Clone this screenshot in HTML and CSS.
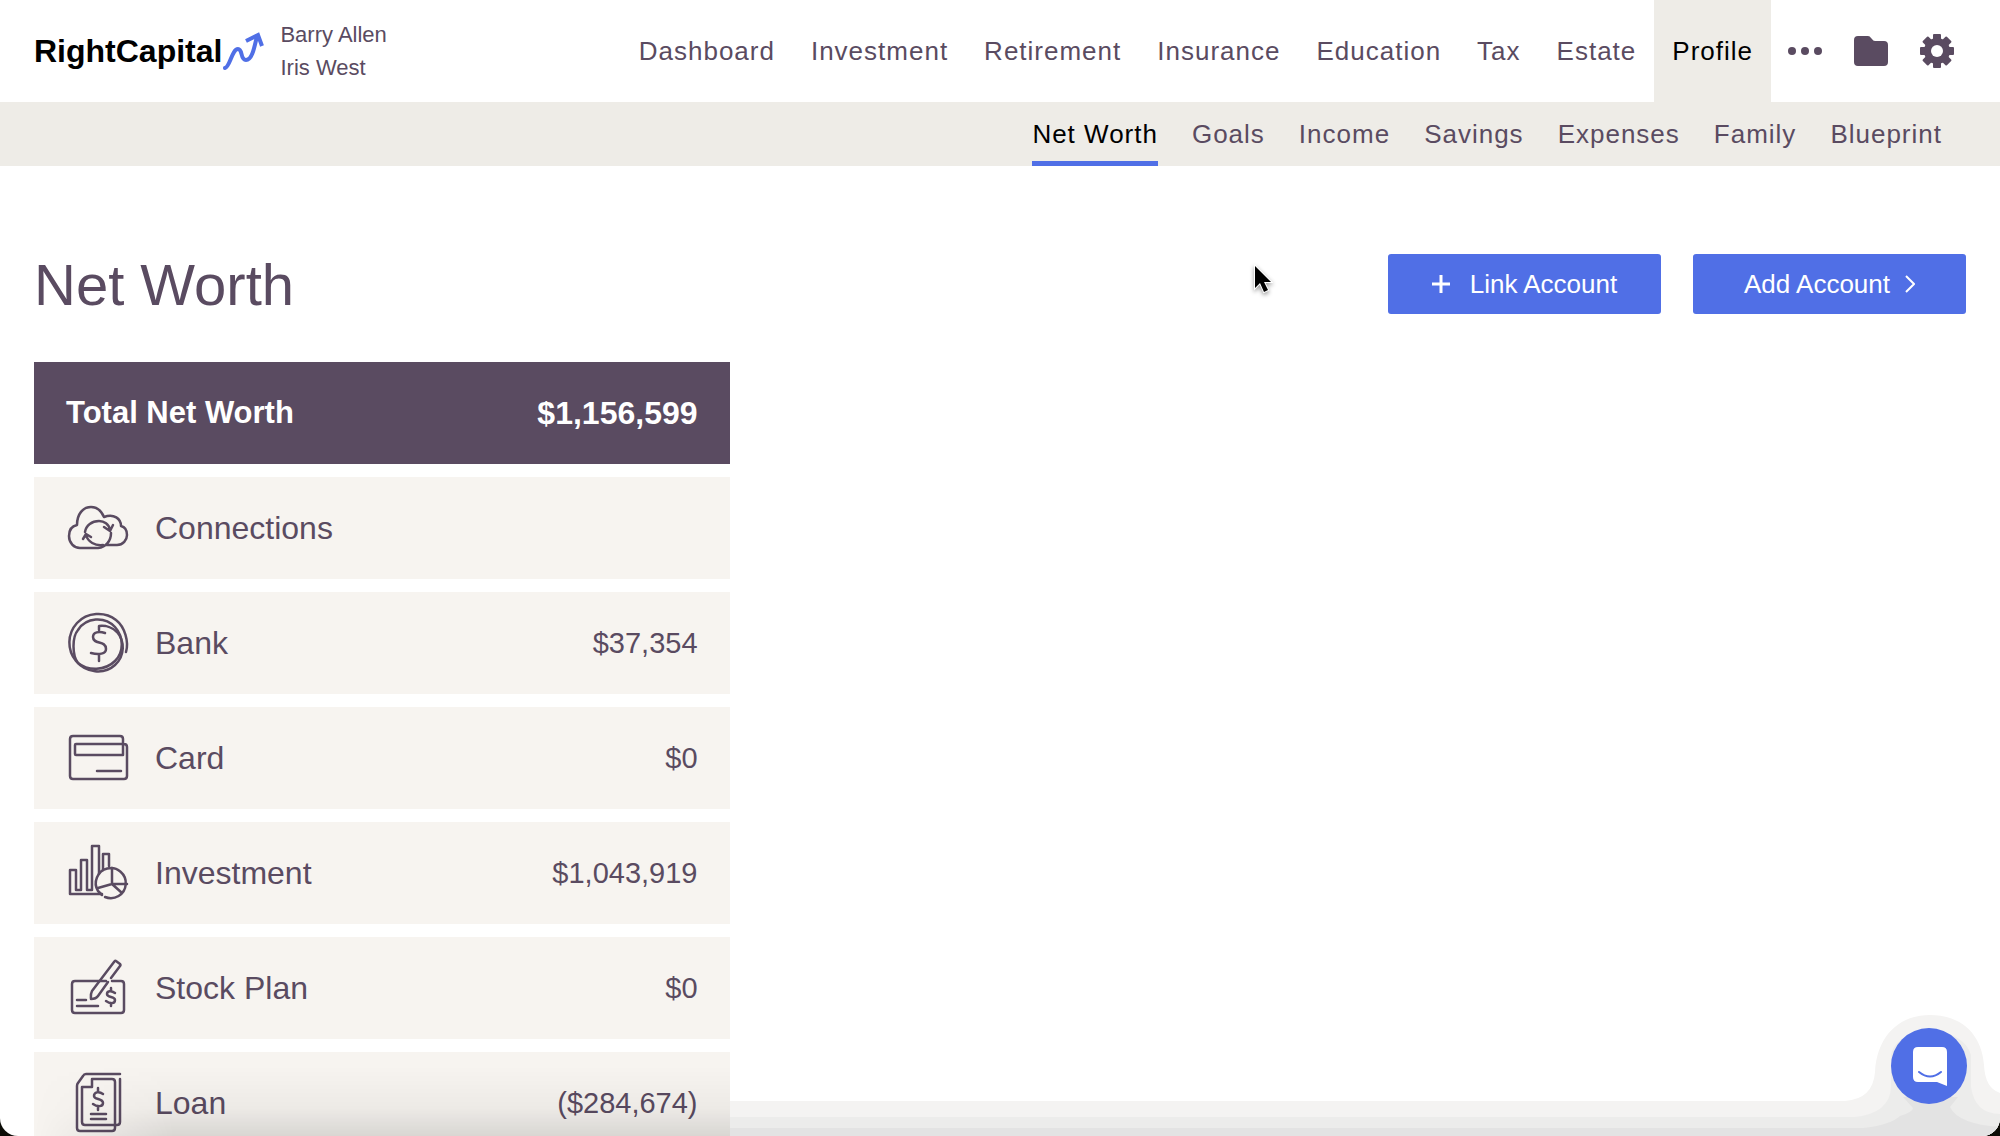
FILE: index.html
```html
<!DOCTYPE html>
<html lang="en">
<head>
    <meta charset="UTF-8">
    <meta name="viewport" content="width=device-width, initial-scale=1">
    <title>RightCapital - Net Worth</title>
    <link rel="stylesheet" href="styles.css">
</head>
<body>

<div class="window">

    <header class="header">
        <a class="logo" href="#">RightCapital<svg class="logo-mark" viewBox="0 0 44 40" aria-hidden="true">
            <path d="M3 37C8 36 10 18 16 18C21 18 18 29 24 29C30 29 32 18 35 5" stroke-linecap="round"/>
            <path d="M24 10L36 4L40 15"/>
        </svg></a>
        <div class="clients">
            <span>Barry Allen</span>
            <span>Iris West</span>
        </div>

        <nav class="main-nav">
            <a href="#">Dashboard</a>
            <a href="#">Investment</a>
            <a href="#">Retirement</a>
            <a href="#">Insurance</a>
            <a href="#">Education</a>
            <a href="#">Tax</a>
            <a href="#">Estate</a>
            <a href="#" class="active">Profile</a>
        </nav>

        <div class="tools">
            <button type="button" aria-label="More">
                <svg viewBox="0 0 34 34"><circle cx="4" cy="17" r="4"/><circle cx="17" cy="17" r="4"/><circle cx="30" cy="17" r="4"/></svg>
            </button>
            <button type="button" aria-label="Documents">
                <svg viewBox="0 0 34 34"><path d="M4 2H14Q16 2 17 4L18 5Q19 7 21 7H30Q34 7 34 11V28Q34 32 30 32H4Q0 32 0 28V6Q0 2 4 2Z"/></svg>
            </button>
            <button type="button" aria-label="Settings">
                <svg viewBox="0 0 34 34">
                    <rect x="13" y="0" width="8" height="34" rx="1"/>
                    <rect x="0" y="13" width="34" height="8" rx="1"/>
                    <rect x="13" y="0" width="8" height="34" rx="1" transform="rotate(45 17 17)"/>
                    <rect x="13" y="0" width="8" height="34" rx="1" transform="rotate(-45 17 17)"/>
                    <circle cx="17" cy="17" r="13"/>
                    <circle cx="17" cy="17" r="6" fill="#fff"/>
                </svg>
            </button>
        </div>
    </header>

    <nav class="sub-nav">
        <a href="#" class="active">Net Worth</a>
        <a href="#">Goals</a>
        <a href="#">Income</a>
        <a href="#">Savings</a>
        <a href="#">Expenses</a>
        <a href="#">Family</a>
        <a href="#">Blueprint</a>
    </nav>

    <main>
        <div class="title-row">
            <h1>Net Worth</h1>
            <button type="button" class="btn btn-link">
                <svg width="18" height="18" viewBox="0 0 18 18"><path d="M9 0V18M0 9H18" stroke-width="3"/></svg>
                Link Account
            </button>
            <button type="button" class="btn btn-add">
                Add Account
                <svg width="10" height="18" viewBox="0 0 10 18"><path d="M1 1L9 9L1 17" stroke-width="2"/></svg>
            </button>
        </div>

        <div class="accounts">
            <div class="row total">
                <span class="label">Total Net Worth</span>
                <span class="amount">$1,156,599</span>
            </div>
            <a class="row" href="#">
                <svg viewBox="0 0 64 64">
                    <path d="M41 49H51C57 49 61 44 61 39C61 34 59 31 55 30C55 23 48 17 38 21C35 14 30 11 25 11C17 11 11 18 11 29C6 30 3 34 3 40C3 47 8 52 14 52H32C40 51 45 45 45 37"/>
                    <path d="M19 36C20 29 26 25 33 25C38 25 43 28 44 34M38 31L44 35L47 29"/>
                    <path d="M37 49C29 50 22 46 20 39M17 43L20 38L25 41"/>
                </svg>
                <span class="label">Connections</span>
            </a>
            <a class="row" href="#">
                <svg viewBox="0 0 64 64">
                    <path d="M60 41C63 31 59 16 50 9C39 0 21 1 11 12C1 23 1 39 10 50C20 62 38 64 49 54C59 45 59 30 51 21C47 17 40 14 33 15V19"/>
                    <path d="M12 52C6 44 6 26 12 19C20 6 39 5 49 16C58 26 58 41 49 50C39 60 22 60 12 52"/>
                    <path d="M39 22C33 20 27 21 27 26C27 34 40 29 40 38C40 43 33 44 25 42M33 43V50"/>
                </svg>
                <span class="label">Bank</span>
                <span class="amount">$37,354</span>
            </a>
            <a class="row" href="#">
                <svg viewBox="0 0 64 64">
                    <path d="M57 29V13Q57 10 54 10H7Q4 10 4 13V50Q4 53 7 53H58Q61 53 61 50V21Q61 18 58 18H10Q9 18 9 19V28Q9 29 10 29H57"/>
                    <path d="M31 45H55"/>
                </svg>
                <span class="label">Card</span>
                <span class="amount">$0</span>
            </a>
            <a class="row" href="#">
                <svg viewBox="0 0 64 64">
                    <path d="M36 53H4V29H10V49H15V19H21V49H26V5H33V33M37 29V13H43V25"/>
                    <path d="M39 56A15 15 0 1 0 32 50L36 54M46 27V43H61M46 43L56 52M46 43L32 47"/>
                </svg>
                <span class="label">Investment</span>
                <span class="amount">$1,043,919</span>
            </a>
            <a class="row" href="#">
                <svg viewBox="0 0 64 64">
                    <path d="M40 25H9Q6 25 6 28V54Q6 57 9 57H55Q58 57 58 54V28Q58 25 55 25H46"/>
                    <path d="M45 22L54 10Q55 9 54 8L50 5Q49 4 48 6L26 35C24 39 25 41 25 43C28 43 30 43 32 40L42 26"/>
                    <path d="M11 44H20M11 50H32M49 37C45 34 41 35 41 38C41 42 49 40 49 44C49 48 44 48 40 45M45 32V35M45 47V50"/>
                </svg>
                <span class="label">Stock Plan</span>
                <span class="amount">$0</span>
            </a>
            <a class="row" href="#">
                <svg viewBox="0 0 64 64">
                    <path d="M54 3H20Q18 3 17 5L12 12Q11 13 11 15V57Q11 60 14 60H46Q49 60 49 57V11Q49 8 46 8H26V16H16V51Q16 54 19 54H51Q54 54 54 51V8"/>
                    <path d="M37 23C33 20 28 21 28 25C28 29 37 27 37 32C37 36 31 36 27 33M32 17V21M32 35V39M25 43H40M25 48H40"/>
                </svg>
                <span class="label">Loan</span>
                <span class="amount">($284,674)</span>
            </a>
        </div>
    </main>

    <!-- shade along the bottom edge, behind the chat button -->
    <div class="shade-rows"></div>
    <div class="shade">
        <div class="shade-line"></div>
        <svg class="shade-end" viewBox="0 0 300 146" aria-hidden="true">
            <path fill="#f4f3f2" d="M0 111H145Q173 109 175 82C177 45 200 25 230 25C262 25 282 45 284 75Q285 98 300 103V146H0Z"/>
            <path fill="#ececeb" d="M0 127H155Q190 123 191 97V65C198 33 262 33 271 65V97Q275 124 300 124V146H0Z"/>
            <path fill="#e3e3e3" d="M0 138H163Q190 135 200 126Q213 122 213 118L203 107H258L250 117Q258 134 300 137V146H0Z"/>
        </svg>
    </div>

    <button type="button" class="chat" aria-label="Open chat">
        <svg viewBox="0 0 76 76">
            <path fill="#fff" d="M27 19H51Q56 19 56 24V58L46 54H27Q22 54 22 49V24Q22 19 27 19Z"/>
            <path fill="none" stroke="#506fe6" stroke-width="2" stroke-linecap="round" d="M28 44Q39 53 50 44"/>
        </svg>
    </button>

    <svg class="pointer" viewBox="0 0 20 32" aria-hidden="true">
        <path d="M2 2V24L7 19L11 28L15 26L11 18H18Z"/>
    </svg>

</div>

</body>
</html>
```
FILE: styles.css
```css
* {
    box-sizing: border-box;
}

html {
    background: #0c0c06;
}

body {
    margin: 0;
    font-family: "Liberation Sans", Arial, sans-serif;
    font-size: 26px;
    color: #5a4b61;
}

a {
    color: inherit;
    text-decoration: none;
}

button {
    font: inherit;
    border: 0;
    padding: 0;
    cursor: pointer;
}

.window {
    position: relative;
    height: 100vh;
    overflow: hidden;
    background: #fff;
    border-radius: 0 0 18px 18px;
}

/* Header */
.header {
    display: flex;
    align-items: center;
    height: 102px;
    padding: 0 46px 0 34px;
}

.logo {
    display: flex;
    align-items: center;
    font-size: 32px;
    font-weight: bold;
    color: #000;
}

.logo-mark {
    width: 44px;
    height: 40px;
    fill: none;
    stroke: #506fe6;
    stroke-width: 4;
}

.clients {
    display: flex;
    flex-direction: column;
    margin-left: 14px;
    font-size: 22px;
    line-height: 33px;
}

.main-nav {
    display: flex;
    align-self: stretch;
    margin-left: auto;
    letter-spacing: 1px;
}

.main-nav a {
    display: flex;
    align-items: center;
    padding: 0 18px;
}

.main-nav .active {
    background: #eeece7;
    color: #000;
}

.tools {
    display: flex;
    gap: 32px;
    margin-left: 17px;
}

.tools button {
    width: 34px;
    height: 34px;
    background: none;
}

.tools svg {
    display: block;
    fill: #5a4b61;
}

.sub-nav {
    display: flex;
    justify-content: flex-end;
    gap: 34px;
    height: 64px;
    padding: 0 58px;
    background: #eeece7;
    letter-spacing: 1px;
    line-height: 64px;
}

.sub-nav .active {
    color: #000;
    box-shadow: inset 0 -5px #506fe6;
}

/* Content */
main {
    padding: 88px 34px 0;
}

.title-row {
    display: flex;
    align-items: center;
    gap: 32px;
    height: 60px;
    margin-bottom: 48px;
}

h1 {
    margin: 0 auto 0 0;
    font-size: 58px;
    font-weight: normal;
}

.btn {
    display: flex;
    align-items: center;
    justify-content: center;
    width: 273px;
    height: 60px;
    border-radius: 3px;
    background: #506fe6;
    color: #fff;
}

.btn svg {
    fill: none;
    stroke: #fff;
}

.btn-link {
    gap: 20px;
}

.btn-add {
    gap: 15px;
}

.accounts {
    display: flex;
    flex-direction: column;
    gap: 13px;
    width: 36%;
}

.row {
    display: flex;
    align-items: center;
    height: 102px;
    padding: 0 32px;
    background: #f7f4f0;
    font-size: 32px;
}

.row svg {
    width: 64px;
    height: 64px;
    margin-right: 25px;
    fill: none;
    stroke: #5a4b61;
    stroke-width: 2.5;
    stroke-linecap: round;
    stroke-linejoin: round;
}

.amount {
    margin-left: auto;
    font-size: 29px;
}

.total {
    background: #5a4b61;
    color: #fff;
    font-weight: bold;
}

.total .label {
    font-size: 31px;
}

.total .amount {
    font-size: 32px;
}

/* Bottom shade */
.shade-rows,
.shade {
    position: absolute;
    bottom: 0;
    pointer-events: none;
}

.shade-rows {
    left: 34px;
    width: calc((100% - 68px) * 0.36);
    height: 70px;
    background: linear-gradient(rgba(0, 0, 0, 0), rgba(0, 0, 0, 0.04) 60%, rgba(0, 0, 0, 0.12));
    -webkit-mask-image: linear-gradient(to right, transparent, #000 140px);
    mask-image: linear-gradient(to right, transparent, #000 140px);
}

.shade {
    display: flex;
    align-items: flex-end;
    right: 0;
    left: calc(34px + (100% - 68px) * 0.36);
}

.shade-line {
    flex: 1;
    height: 35px;
    background: linear-gradient(#f4f3f2 16px, #ececeb 16px, #ececeb 27px, #e3e3e3 27px);
}

.shade-end {
    width: 300px;
    height: 146px;
}

.chat {
    position: absolute;
    right: 33px;
    bottom: 32px;
    width: 76px;
    height: 76px;
    border-radius: 50%;
    background: #506fe6;
}

.chat svg {
    display: block;
}

.pointer {
    position: absolute;
    top: 264px;
    left: 1253px;
    width: 20px;
    height: 32px;
    fill: #000;
    stroke: #fff;
    stroke-width: 2;
    paint-order: stroke;
    filter: drop-shadow(0 2px 2px rgba(0, 0, 0, 0.4));
}
```
